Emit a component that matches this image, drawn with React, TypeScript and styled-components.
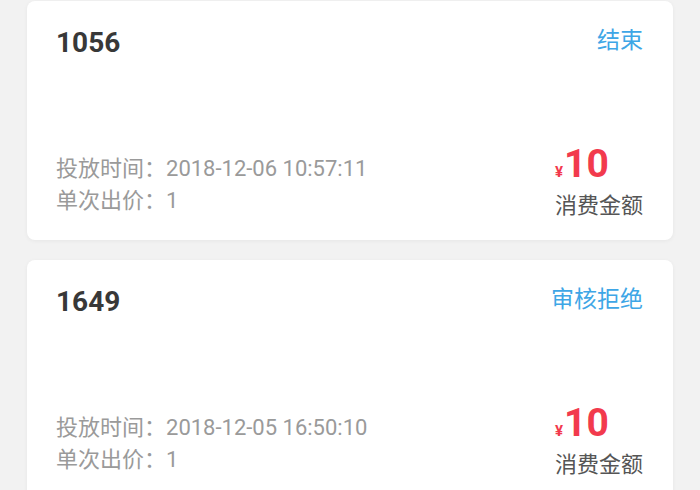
import styled, { createGlobalStyle } from "styled-components";

const GlobalStyle = createGlobalStyle`
    body {
        margin: 0;
        background: #f2f2f2;
        font-family: Roboto, "Noto Sans CJK SC", sans-serif;
    }
`;

const ListWrapper = styled.div`
    display: flex;
    flex-direction: column;
    gap: 20px;
    padding: 1px 27px 0 27px;
`;

const Card = styled.div`
    display: flex;
    flex-direction: column;
    height: 239px;
    box-sizing: border-box;
    padding: 25px 30px 20px 29px;
    background: #ffffff;
    border-radius: 8px;
    box-shadow: 0 1px 4px rgba(0, 0, 0, 0.05);
`;

const CardHeader = styled.div`
    display: flex;
    justify-content: space-between;
    align-items: flex-start;
`;

const PlanId = styled.div`
    font-size: 28px;
    font-weight: bold;
    line-height: 34px;
    color: #383838;
`;

const Status = styled.div`
    font-size: 23px;
    line-height: 30px;
    color: #3ea6e6;
`;

const CardFooter = styled.div`
    display: flex;
    justify-content: space-between;
    align-items: flex-end;
    margin-top: auto;
`;

const InfoList = styled.div`
    display: flex;
    flex-direction: column;
    padding-bottom: 3px;
`;

const InfoLine = styled.div`
    font-size: 22px;
    line-height: 32px;
    color: #9a9a9a;
`;

const AmountBlock = styled.div`
    display: flex;
    flex-direction: column;
    align-items: flex-start;
`;

const Amount = styled.div`
    display: flex;
    align-items: baseline;
    color: #f23a4d;
    font-weight: bold;
    line-height: 40px;
`;

const Currency = styled.span`
    font-size: 15px;
    margin-right: 1px;
`;

const AmountValue = styled.span`
    font-size: 39px;
`;

const AmountLabel = styled.div`
    font-size: 22px;
    line-height: 28px;
    color: #555555;
`;

type Plan = {
    id: string;
    status: string;
    time: string;
    price: string;
    amount: string;
};

const plans: Plan[] = [
    { id: "1056", status: "结束", time: "2018-12-06 10:57:11", price: "1", amount: "10" },
    { id: "1649", status: "审核拒绝", time: "2018-12-05 16:50:10", price: "1", amount: "10" },
];

const PlanCard = ({ plan }: { plan: Plan }) => {
    return (
        <Card>
            <CardHeader>
                <PlanId>{plan.id}</PlanId>
                <Status>{plan.status}</Status>
            </CardHeader>
            <CardFooter>
                <InfoList>
                    <InfoLine>投放时间：{plan.time}</InfoLine>
                    <InfoLine>单次出价：{plan.price}</InfoLine>
                </InfoList>
                <AmountBlock>
                    <Amount>
                        <Currency>¥</Currency>
                        <AmountValue>{plan.amount}</AmountValue>
                    </Amount>
                    <AmountLabel>消费金额</AmountLabel>
                </AmountBlock>
            </CardFooter>
        </Card>
    );
};

const App = () => {
    return (
        <>
            <GlobalStyle />
            <ListWrapper>
                {plans.map((plan) => (
                    <PlanCard key={plan.id} plan={plan} />
                ))}
            </ListWrapper>
        </>
    );
};

export default App;
